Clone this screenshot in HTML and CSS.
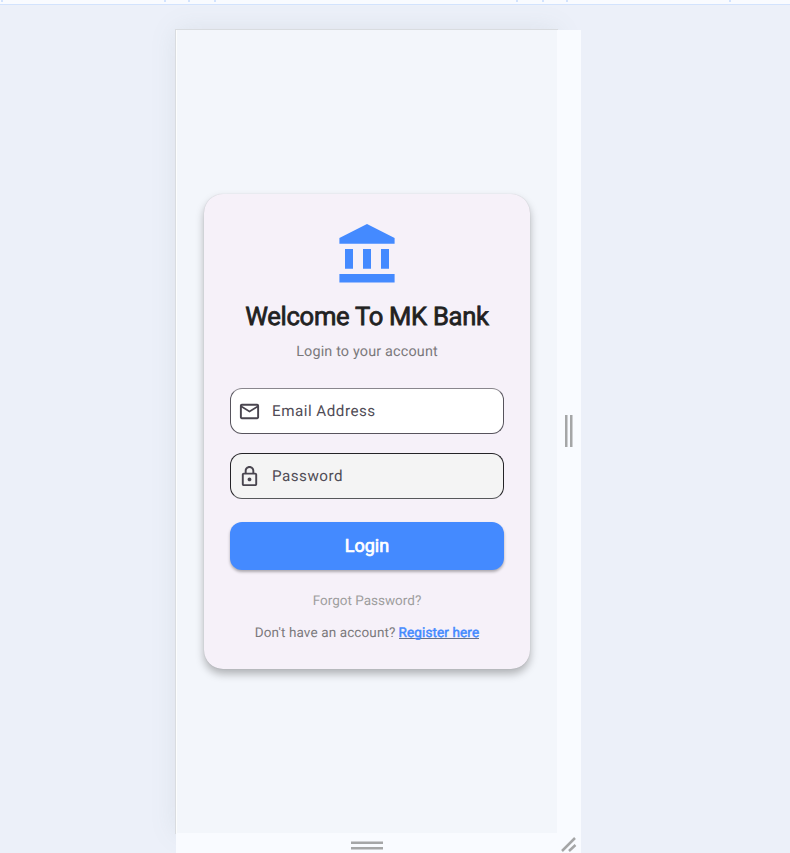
FILE: index.html
```html
<!DOCTYPE html>
<html lang="en">
<head>
<meta charset="utf-8">
<title>MK Bank</title>
<link rel="stylesheet" href="styles.css">
</head>
<body>
<div class="ruler"><i class="t1"></i><i class="t2"></i><i class="t3"></i><i class="t4"></i><i class="t5"></i><i class="t6"></i><i class="t7"></i><i class="t8"></i></div>
<div class="device">
  <main class="screen">
    <form class="card">
      <svg class="bank" viewBox="0 0 56 59" width="56" height="59" fill="#448aff"><path d="M28 0 55.600 14v5.800H.400V14zM6 25h8v19.800H6zM24 25h8v19.800h-8zM42 25h8v19.800h-8zM.400 50h55.200v8.500H.400z"/></svg>
      <h1><span>Welcome To MK Bank</span></h1>
      <p class="sub"><span>Login to your account</span></p>
      <div class="field email">
        <svg viewBox="0 0 24 24" width="23" height="23" fill="#49454f"><path d="M22 6c0-1.100-.9-2-2-2H4c-1.100 0-2 .9-2 2v12c0 1.100.9 2 2 2h16c1.100 0 2-.9 2-2V6zm-2 0-8 5-8-5h16zm0 12H4V8l8 5 8-5v10z"/></svg>
        <span>Email Address</span>
      </div>
      <div class="field password">
        <svg viewBox="0 0 24 24" width="23" height="23" fill="#49454f"><path d="M18 8h-1V6c0-2.760-2.240-5-5-5S7 3.240 7 6v2H6c-1.100 0-2 .9-2 2v10c0 1.100.9 2 2 2h12c1.100 0 2-.9 2-2V10c0-1.100-.9-2-2-2zM9 6c0-1.660 1.340-3 3-3s3 1.340 3 3v2H9V6zm9 14H6V10h12v10zm-6-3c1.100 0 2-.9 2-2s-.9-2-2-2-2 .9-2 2 .9 2 2 2z"/></svg>
        <span>Password</span>
      </div>
      <button type="button"><span>Login</span></button>
      <p class="forgot"><span>Forgot Password?</span></p>
      <p class="signup"><span class="ask">Don't have an account?</span><a>Register here</a></p>
    </form>
  </main>
  <div class="side"><svg width="8" height="34" viewBox="0 0 8 34" fill="#a5a6a7"><path d="M0 1h2.500v32H0zM5 1h2.500v32H5z"/></svg></div>
  <div class="bottom"><svg width="32" height="9" viewBox="0 0 32 9" fill="#a5a6a7"><path d="M0 .5h32V3H0zM0 6h32v2.500H0z"/></svg></div>
  <div class="corner"><svg width="16" height="16" viewBox="0 0 16 16" stroke="#a5a6a7" stroke-width="2.500"><path d="M1 15 14 2M8 15l6.500-6"/></svg></div>
</div>
</body>
</html>
```
FILE: styles.css
```css
* { box-sizing: border-box; }
body { margin: 0; height: 853px; overflow: hidden; background: #ecf0f9; font-family: Roboto, sans-serif; text-rendering: geometricPrecision; }
.ruler { height: 5px; background: #f9fbff; border-bottom: 1px solid #d3e3fd; display: flex; }
.ruler i { width: 2px; height: 2px; background: #d3e3fd; flex: none; }
.t1 { margin-left: 1px; }
.t2 { margin-left: 161px; }
.t3 { margin-left: 22px; }
.t4 { margin-left: 24px; }
.t5 { margin-left: 300px; }
.t6 { margin-left: 24px; }
.t7 { margin-left: 22px; }
.t8 { margin-left: 161px; }
.device { width: 405px; margin: 25px 0 0 176px; display: grid; grid-template: 803px 20px / 381px 24px; }
.screen { background: #f3f6fb; border-left: 1px solid #fcfdfd; padding: 164px 0 0 27px; box-shadow: 0 0 0 1px #d9dce0, 0 0 25px rgba(110,130,130,.13); }
.side, .bottom, .corner { background: #f9fbff; position: relative; display: flex; }
.side { padding: 384px 0 0 8px; }
.bottom { padding: 8px 0 0 175px; }
.corner { padding: 3px 0 0 4px; }
.side svg, .bottom svg, .corner svg { flex: none; }
.corner svg { fill: none; }
.card { width: 326px; height: 475px; border-radius: 19px; padding: 30px 26px 0; background: #f6f1f9; box-shadow: 0 0 1px rgba(0,0,0,.18), 0 5px 8px rgba(0,0,0,.28); display: flex; flex-direction: column; align-items: center; }
.bank { flex: none; }
h1, p { margin: 0; white-space: nowrap; display: flex; justify-content: center; align-items: center; }
h1 { height: 32px; margin-top: 18px; font-size: 25.6px; font-weight: 400; color: #212121; letter-spacing: -.28px; -webkit-text-stroke: .75px; }
.sub { height: 20px; margin-top: 8px; font-size: 14.4px; letter-spacing: .16px; color: #7b797c; }
.field { width: 274px; height: 46px; border: 1px solid #57545d; border-radius: 12px; display: flex; align-items: center; padding-left: 7px; font-size: 15.2px; letter-spacing: .5px; color: #504c56; }
.field span { margin-left: 11px; }
.email { margin-top: 27px; background: #fff; border-top-color: #89868d; }
.password { margin-top: 19px; background: #f4f4f4; border-color: #242327; border-bottom-color: #56575a; }
button { width: 274px; height: 48px; margin-top: 23px; padding: 0 0 2px; border: 0; border-radius: 12px; background: #448aff; color: #fff; font: 400 18px Roboto, sans-serif; -webkit-text-stroke: .7px; box-shadow: 0 2px 3px rgba(0,0,0,.3); }
.forgot { height: 20px; margin-top: 21px; font-size: 13.5px; letter-spacing: 0; color: #9e9e9e; }
.signup { height: 20px; margin-top: 12px; font-size: 13.5px; letter-spacing: .12px; color: #7b797c; }
a { margin-left: 3px; color: #448aff; line-height: 16px; letter-spacing: .13px; -webkit-text-stroke: .5px; background: linear-gradient(#66728b, #66728b) 0 13px / 100% 1px no-repeat; }
```
